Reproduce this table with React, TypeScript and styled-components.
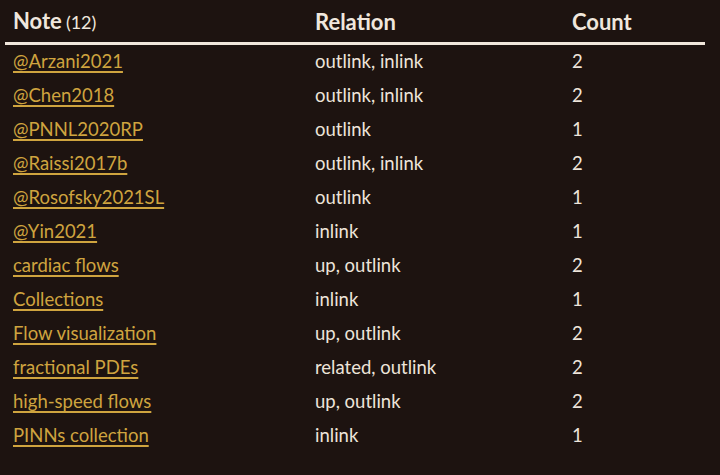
import styled, { createGlobalStyle } from 'styled-components';

const GlobalStyle = createGlobalStyle`
    html, body {
        margin : 0;
        padding : 0;
        background : #1d1310;
    }
    body {
        font-family : Lato, "Noto Sans", sans-serif;
        color : #ede4da;
    }
`;

const Page = styled.div`
    width : 720px;
    height : 475px;
    padding : 0 15px 0 5px;
    box-sizing : border-box;
`;

const Table = styled.table`
    width : 700px;
    border-collapse : collapse;
    table-layout : fixed;
`;

// width is the content width, padding comes on top of it
const HeadCell = styled.th<{ width : number }>`
    width : ${(p) => p.width}px;
    text-align : left;
    font-weight : 700;
    font-size : 22px;
    line-height : 26px;
    padding : 8px 8px 7px;
    border-bottom : 3px solid #f1e7dc;
    color : #f0e7dd;
`;

const CountNote = styled.span`
    font-weight : 400;
    font-size : 18px;
    margin-left : 4px;
`;

const Cell = styled.td`
    font-size : 18.5px;
    line-height : 26px;
    padding : 3px 8px 5px;
    white-space : nowrap;
`;

const NoteLink = styled.a`
    color : #cfa43f;
    text-decoration : underline;
    text-decoration-thickness : 2px;
    text-underline-offset : 3px;
    cursor : pointer;
`;

const rows : [string, string, number][] = [
    ['@Arzani2021', 'outlink, inlink', 2],
    ['@Chen2018', 'outlink, inlink', 2],
    ['@PNNL2020RP', 'outlink', 1],
    ['@Raissi2017b', 'outlink, inlink', 2],
    ['@Rosofsky2021SL', 'outlink', 1],
    ['@Yin2021', 'inlink', 1],
    ['cardiac flows', 'up, outlink', 2],
    ['Collections', 'inlink', 1],
    ['Flow visualization', 'up, outlink', 2],
    ['fractional PDEs', 'related, outlink', 2],
    ['high-speed flows', 'up, outlink', 2],
    ['PINNs collection', 'inlink', 1],
];

function App() {
    return (
        <Page>
            <GlobalStyle />
            <Table>
                <thead>
                    <tr>
                        <HeadCell width={286}>Note<CountNote>(12)</CountNote></HeadCell>
                        <HeadCell width={241}>Relation</HeadCell>
                        <HeadCell width={125}>Count</HeadCell>
                    </tr>
                </thead>
                <tbody>
                    {rows.map(([note, relation, count]) => (
                    <tr key={note}>
                        <Cell><NoteLink>{note}</NoteLink></Cell>
                        <Cell>{relation}</Cell>
                        <Cell>{count}</Cell>
                    </tr>
                    ))}
                </tbody>
            </Table>
        </Page>
    )
}

export default App;
